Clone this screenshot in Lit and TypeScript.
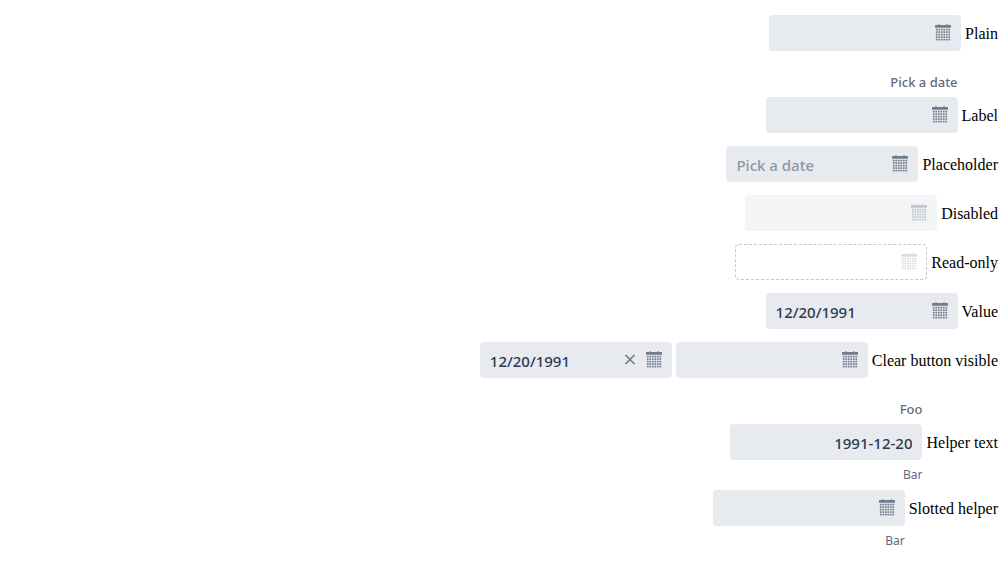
import { LitElement, html, css, svg, nothing } from "lit";
import { customElement, property } from "lit/decorators.js";

interface Field {
  value?: string;
  placeholder?: string;
  state?: "disabled" | "readonly";
  native?: boolean;
}

interface Row {
  caption: string;
  label?: string;
  helper?: string;
  fields: Field[];
}

const rows: Row[] = [
  { caption: "Plain", fields: [{}] },
  { caption: "Label", label: "Pick a date", fields: [{}] },
  { caption: "Placeholder", fields: [{ placeholder: "Pick a date" }] },
  { caption: "Disabled", fields: [{ state: "disabled" }] },
  { caption: "Read-only", fields: [{ state: "readonly" }] },
  { caption: "Value", fields: [{ value: "12/20/1991" }] },
  { caption: "Clear button visible", fields: [{ value: "12/20/1991" }, {}] },
  { caption: "Helper text", label: "Foo", helper: "Bar", fields: [{ value: "1991-12-20", native: true }] },
  { caption: "Slotted helper", helper: "Bar", fields: [{}] },
];

const dotColumns = [0, 1, 2, 3, 4, 5];
const dotRows = [0, 1, 2, 3, 4];

const calendarIcon = html`<svg width="16" height="18" viewBox="0 0 16 18" aria-hidden="true">
  <path d="M3 .4h2V1h6V.4h2V1h2.500l.5.5V3.800H0V1.500L.5 1H3z" fill="currentColor" />
  ${dotRows.map((y) =>
    dotColumns.map(
      (x) => svg`<rect x=${0.9 + x * 2.5} y=${4.8 + y * 2.5} width="1.700" height="1.600" fill="currentColor" />`
    )
  )}
</svg>`;

const clearIcon = html`<svg width="12" height="12" viewBox="0 0 12 12" aria-hidden="true">
  <path d="M1.500 1l9 9M10.500 1l-9 9" fill="none" stroke="currentColor" stroke-width="1.700" />
</svg>`;

@customElement("app-root")
export class AppRoot extends LitElement {
  static styles = css`
    :host {
      display: flex;
      flex-direction: column;
      align-items: flex-end;
      gap: 13px;
      padding: 15px 10px;
      font: 16px "Liberation Serif", serif;
      color: #000;
      background: #fff;
    }
    .row {
      display: grid;
      grid-template-columns: auto auto;
      column-gap: 4px;
    }
    .label, .helper, .input {
      font-family: "Noto Sans", "Open Sans", sans-serif;
    }
    .label {
      grid-column: 1;
      justify-self: end;
      height: 33px;
      box-sizing: border-box;
      padding-top: 9px;
      font-size: 13px;
      line-height: 18px;
      font-weight: 500;
      color: #5f6b7c;
    }
    .fields {
      grid-column: 1;
      display: flex;
      gap: 4px;
    }
    .caption {
      grid-column: 2;
      line-height: 38px;
      height: 36px;
    }
    .helper {
      grid-column: 1;
      justify-self: end;
      height: 17px;
      padding-top: 6px;
      box-sizing: border-box;
      font-size: 12px;
      line-height: 17px;
      color: #5f6b7c;
    }
    .field {
      display: flex;
      align-items: center;
      box-sizing: border-box;
      width: 192px;
      height: 36px;
      padding: 0 10px;
      gap: 10px;
      border-radius: 4px;
      background: #e7eaee;
      color: #707b8b;
    }
    .input {
      flex: 1;
      min-width: 0;
      height: 36px;
      box-sizing: border-box;
      padding: 2px 0 0;
      border: 0;
      outline: 0;
      background: none;
      font-size: 15px;
      font-weight: 500;
      color: #2c3a4f;
    }
    .input::placeholder {
      color: #8d96a3;
      opacity: 1;
    }
    .native {
      text-align: right;
    }
    .icon {
      display: flex;
      flex: none;
      padding: 0;
      border: 0;
      background: none;
      color: inherit;
    }
    .disabled {
      background: #f3f4f6;
      color: #c0c5cd;
    }
    .readonly {
      padding: 0 9px;
      border: 1px dashed #c3c8cf;
      background: none;
      color: #dadde2;
    }
  `;

  @property({ attribute: false }) rows: Row[] = rows;

  private renderField(field: Field, id: string, clearable: boolean) {
    return html`<div class="field ${field.state ?? ""}">
      <input
        id=${id}
        class="input ${field.native ? "native" : ""}"
        type="text"
        aria-labelledby="${id.replace(/-\d+$/, "")}"
        .value=${field.value ?? ""}
        placeholder=${field.placeholder ?? nothing}
        ?disabled=${field.state === "disabled"}
        ?readonly=${field.state === "readonly"}
      />
      ${clearable && field.value
        ? html`<button class="icon" type="button" aria-label="Clear">${clearIcon}</button>`
        : nothing}
      ${field.native
        ? nothing
        : html`<button class="icon" type="button" aria-label="Open calendar" ?disabled=${field.state !== undefined}>
            ${calendarIcon}
          </button>`}
    </div>`;
  }

  render() {
    return this.rows.map((row, r) => {
      const clearable = row.fields.length > 1;
      return html`<div class="row">
        ${row.label ? html`<label class="label" for="row${r}-0">${row.label}</label>` : nothing}
        <div class="fields">${row.fields.map((f, i) => this.renderField(f, `row${r}-${i}`, clearable))}</div>
        <label class="caption" id="row${r}" for="row${r}-0">${row.caption}</label>
        ${row.helper ? html`<div class="helper">${row.helper}</div>` : nothing}
      </div>`;
    });
  }
}
